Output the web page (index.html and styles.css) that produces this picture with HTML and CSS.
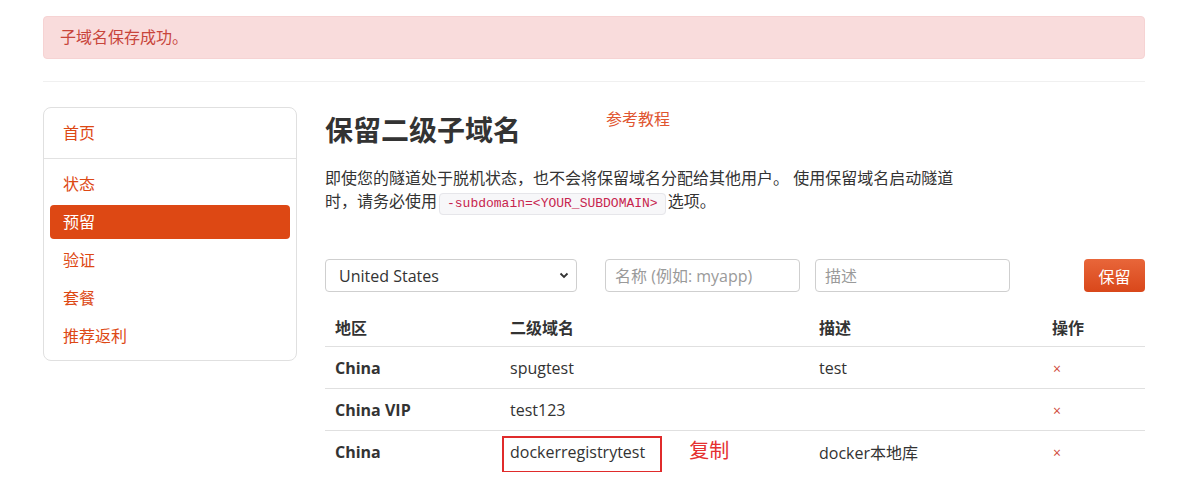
FILE: index.html
```html
<!DOCTYPE html>
<html lang="zh-CN">
<head>
    <meta charset="UTF-8">
    <title>保留二级子域名</title>
    <link rel="stylesheet" href="styles.css">
</head>
<body>
    <div class="container">
        <div class="alert">子域名保存成功。</div>
        <hr class="divider">

        <div class="layout">
            <!-- Sidebar -->
            <div class="sidebar">
                <div class="nav-group">
                    <a class="nav-item" href="#">首页</a>
                </div>
                <div class="nav-group">
                    <a class="nav-item" href="#">状态</a>
                    <a class="nav-item active" href="#">预留</a>
                    <a class="nav-item" href="#">验证</a>
                    <a class="nav-item" href="#">套餐</a>
                    <a class="nav-item" href="#">推荐返利</a>
                </div>
            </div>

            <!-- Main -->
            <div class="main">
                <div class="title-row">
                    <h1>保留二级子域名</h1>
                    <a class="tutorial" href="#">参考教程</a>
                </div>
                <p class="intro">即使您的隧道处于脱机状态，也不会将保留域名分配给其他用户。 使用保留域名启动隧道时，请务必使用<code>-subdomain=&lt;YOUR_SUBDOMAIN&gt;</code>选项。</p>

                <form class="reserve-form">
                    <div class="select-wrap">
                        <select class="control region">
                            <option>United States</option>
                            <option>China</option>
                            <option>China VIP</option>
                        </select>
                        <svg class="chevron" width="10" height="7" viewBox="0 0 10 7">
                            <path d="M1.5 1.5 L5 5 L8.5 1.5" fill="none" stroke="#333" stroke-width="1.8"/>
                        </svg>
                    </div>
                    <input class="control name" type="text" placeholder="名称 (例如: myapp)">
                    <input class="control desc" type="text" placeholder="描述">
                    <button class="btn" type="button">保留</button>
                </form>

                <table class="domains">
                    <thead>
                        <tr>
                            <th class="col-region">地区</th>
                            <th class="col-name">二级域名</th>
                            <th class="col-desc">描述</th>
                            <th class="col-op">操作</th>
                        </tr>
                    </thead>
                    <tbody>
                        <tr>
                            <td class="region-cell">China</td>
                            <td>spugtest</td>
                            <td>test</td>
                            <td><a class="remove" href="#">×</a></td>
                        </tr>
                        <tr>
                            <td class="region-cell">China VIP</td>
                            <td>test123</td>
                            <td></td>
                            <td><a class="remove" href="#">×</a></td>
                        </tr>
                        <tr>
                            <td class="region-cell">China</td>
                            <td><span class="marked">dockerregistrytest</span><span class="note">复制</span></td>
                            <td>docker本地库</td>
                            <td><a class="remove" href="#">×</a></td>
                        </tr>
                    </tbody>
                </table>
            </div>
        </div>
    </div>
</body>
</html>
```

FILE: styles.css
```css
body {
    margin: 0;
    font-family: "Open Sans", "Noto Sans CJK SC", sans-serif;
    font-size: 16px;
    color: #333;
    background: #fff;
}

.container {
    width: 1102px;
    margin: 0 43px;
    padding-top: 16px;
}

.alert {
    background: #f9dcdc;
    border: 1px solid #f6d3d3;
    border-radius: 4px;
    color: #c8453b;
    padding: 10px 16px;
    line-height: 21px;
}

.divider {
    border: 0;
    border-top: 1px solid #f0f0f0;
    margin: 22px 0 25px;
}

.layout {
    display: flex;
    gap: 28px;
}

/* Sidebar */
.sidebar {
    width: 252px;
    height: 252px;
    border: 1px solid #e0e0e0;
    border-radius: 8px;
    flex-shrink: 0;
}

.nav-group {
    display: flex;
    flex-direction: column;
    gap: 4px;
    padding: 8px 6px;
}

.nav-group:first-child {
    border-bottom: 1px solid #e2e2e2;
}

.nav-item {
    display: block;
    height: 34px;
    line-height: 34px;
    padding: 0 13px;
    color: #dd4814;
    text-decoration: none;
    border-radius: 4px;
}

.nav-item.active {
    background: #dd4814;
    color: #fff;
}

/* Main */
.main {
    width: 820px;
}

.title-row {
    display: flex;
    align-items: flex-start;
}

h1 {
    margin: 3px 0 0;
    font-size: 28px;
    line-height: 40px;
    font-weight: bold;
    color: #333;
}

.tutorial {
    margin-left: 85px;
    color: #e05530;
    text-decoration: none;
    line-height: 24px;
}

.intro {
    width: 640px;
    margin: 17px 0 0;
    line-height: 23px;
}

code {
    font-family: "Liberation Mono", monospace;
    font-size: 13px;
    color: #c7254e;
    background: #f7f7f9;
    border: 1px solid #e6e6ea;
    border-radius: 4px;
    padding: 2px 7px 3px;
    margin: 0 2px;
}

.reserve-form {
    display: flex;
    align-items: center;
    margin-top: 44px;
}

.control {
    height: 33px;
    box-sizing: border-box;
    border: 1px solid #cfcfcf;
    border-radius: 4px;
    font-family: inherit;
    font-size: 16px;
    color: #333;
    background: #fff;
    padding: 0 9px;
}

.control::placeholder {
    color: #9a9a9a;
}

.select-wrap {
    position: relative;
    margin-right: 28px;
}

.region {
    display: block;
    width: 252px;
    padding-left: 13px;
    appearance: none;
    -webkit-appearance: none;
}

.chevron {
    position: absolute;
    right: 8px;
    top: 13px;
}

.name {
    width: 195px;
    margin-right: 15px;
}

.desc {
    width: 195px;
}

.btn {
    margin-left: auto;
    width: 61px;
    height: 33px;
    border: 0;
    border-radius: 4px;
    background: linear-gradient(#e8663a, #d9471a);
    color: #fff;
    font-family: inherit;
    font-size: 16px;
}

/* Table */
.domains {
    width: 820px;
    margin-top: 15px;
    border-collapse: collapse;
    table-layout: fixed;
}

.domains th,
.domains td {
    text-align: left;
    padding: 0 10px;
    height: 41px;
    border-bottom: 1px solid #e0e0e0;
}

.domains th {
    font-weight: bold;
    height: 39px;
}

.domains tbody tr:last-child td {
    border-bottom: 0;
}

.col-region { width: 155px; }
.col-name { width: 289px; }
.col-desc { width: 213px; }

.region-cell {
    font-weight: bold;
}

.remove {
    color: #d04a3c;
    text-decoration: none;
    font-size: 14px;
    padding-left: 1px;
}

.marked {
    position: relative;
}

.marked::after {
    content: "";
    position: absolute;
    left: -8px;
    right: -17px;
    top: -5px;
    bottom: -10px;
    border: 2px solid #e02b2b;
}

.note {
    color: #e53030;
    font-size: 20px;
    margin-left: 44px;
    line-height: 20px;
}
```
